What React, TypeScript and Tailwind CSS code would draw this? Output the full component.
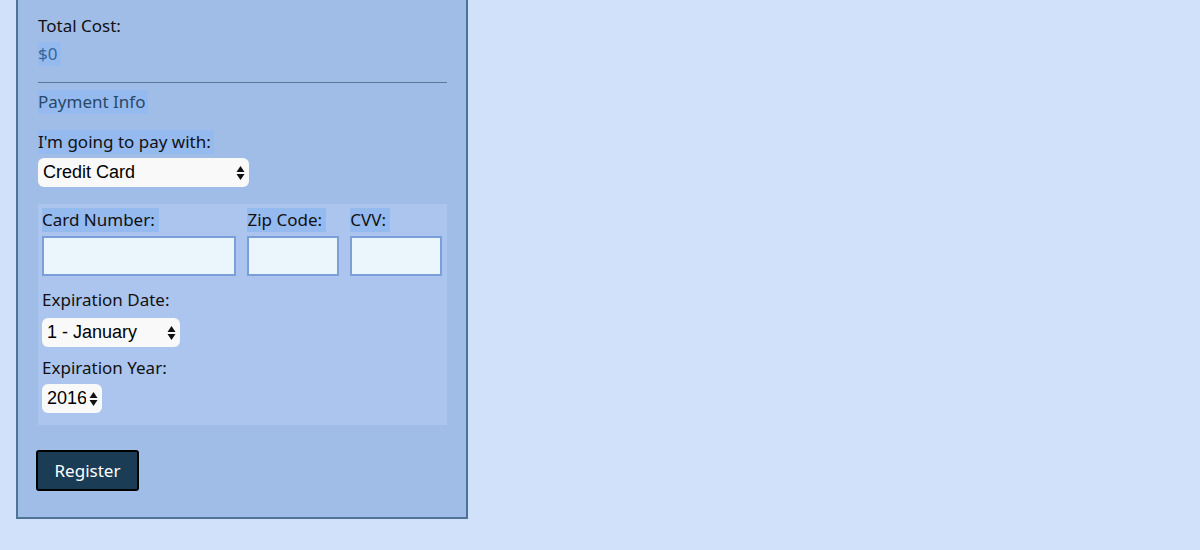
import { useState } from 'react';

function Arrows() {
  return (
    <svg
      className="pointer-events-none absolute right-[4px] top-1/2 -translate-y-1/2"
      width="9"
      height="16"
      viewBox="0 0 9 16"
    >
      <path d="M4.5 1 L8.5 7 L0.5 7 Z" fill="#111" />
      <path d="M4.5 15 L8.5 9 L0.5 9 Z" fill="#111" />
    </svg>
  );
}

interface SelectProps {
  value: string;
  options: string[];
  width: string;
  onChange: (v: string) => void;
}

function FakeSelect({ value, options, width, onChange }: SelectProps) {
  return (
    <div className={`relative ${width} h-[29px]`}>
      <select
        value={value}
        onChange={(e) => onChange(e.target.value)}
        className="h-full w-full appearance-none rounded-[6px] bg-[#f9f9f9] pl-[5px] pr-4 text-[18px] text-black outline-none [font-family:'Liberation_Sans',Arial,sans-serif]"
      >
        {options.map((o) => (
          <option key={o}>{o}</option>
        ))}
      </select>
      <Arrows />
    </div>
  );
}

const months = [
  '1 - January',
  '2 - February',
  '3 - March',
  '4 - April',
  '5 - May',
  '6 - June',
  '7 - July',
  '8 - August',
  '9 - September',
  '10 - October',
  '11 - November',
  '12 - December',
];

export default function App() {
  const [method, setMethod] = useState('Credit Card');
  const [month, setMonth] = useState('1 - January');
  const [year, setYear] = useState('2016');

  return (
    <div className="min-h-[550px] bg-[#d0e1f9] pl-[16px] pb-[30px] text-[17px] text-[#111] [font-family:'Noto_Sans',Lato,sans-serif]">
      <div className="w-[452px] border-x-2 border-b-2 border-[#4f7394] bg-[#a0bde8] pl-[20px] pr-[19px] pt-[14px] pb-[26px]">
        {/* total */}
        <div className="leading-[24px]">Total Cost:</div>
        <div className="mt-[4px] flex">
          <span className="bg-[#94baf0] pr-[4px] leading-[24px] text-[#37669a]">$0</span>
        </div>

        <hr className="mt-[16px] border-0 border-t border-[#5a7a9a]" />

        {/* payment */}
        <div className="mt-[7px] flex">
          <span className="bg-[#94baf0] pr-[3px] leading-[24px] text-[#2a4866]">Payment Info</span>
        </div>
        <div className="mt-[16px] flex">
          <span className="bg-[#94baf0] pr-[3px] leading-[24px]">I'm going to pay with:</span>
        </div>
        <div className="mt-[4px]">
          <FakeSelect
            value={method}
            options={['Credit Card', 'PayPal', 'Bitcoin']}
            width="w-[211px]"
            onChange={setMethod}
          />
        </div>

        {/* card box */}
        <div className="mt-[17px] bg-[#abc5ee] pl-[4px] pr-[5px] pt-[4px] pb-[12px]">
          <div className="flex gap-[11px]">
            <div className="w-[195px]">
              <div className="flex">
                <span className="bg-[#94baf0] pr-[4px] leading-[24px]">Card Number:</span>
              </div>
              <input className="mt-[4px] h-[40px] w-full border-2 border-[#7b9fd9] bg-[#eaf5fc] outline-none" />
            </div>
            <div className="w-[92px]">
              <div className="flex">
                <span className="bg-[#94baf0] pr-[4px] leading-[24px]">Zip Code:</span>
              </div>
              <input className="mt-[4px] h-[40px] w-full border-2 border-[#7b9fd9] bg-[#eaf5fc] outline-none" />
            </div>
            <div className="w-[92px]">
              <div className="flex">
                <span className="bg-[#94baf0] pr-[4px] leading-[24px]">CVV:</span>
              </div>
              <input className="mt-[4px] h-[40px] w-full border-2 border-[#7b9fd9] bg-[#eaf5fc] outline-none" />
            </div>
          </div>

          <div className="mt-[12px] leading-[24px]">Expiration Date:</div>
          <div className="mt-[6px]">
            <FakeSelect value={month} options={months} width="w-[138px]" onChange={setMonth} />
          </div>

          <div className="mt-[9px] leading-[24px]">Expiration Year:</div>
          <div className="mt-[4px]">
            <FakeSelect
              value={year}
              options={['2016', '2017', '2018', '2019', '2020']}
              width="w-[60px]"
              onChange={setYear}
            />
          </div>
        </div>

        <button
          type="button"
          className="mt-[25px] -ml-[2px] h-[41px] w-[103px] rounded-[3px] border-2 border-black bg-[#1a3d55] text-[17px] text-white"
        >
          Register
        </button>
      </div>
    </div>
  );
}
